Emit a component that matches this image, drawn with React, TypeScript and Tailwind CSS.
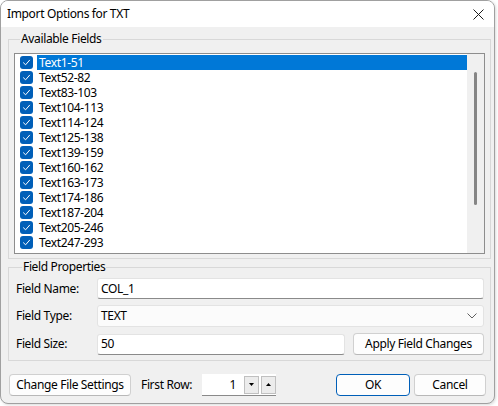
import React from "react";

const fields = [
  "Text1-51",
  "Text52-82",
  "Text83-103",
  "Text104-113",
  "Text114-124",
  "Text125-138",
  "Text139-159",
  "Text160-162",
  "Text163-173",
  "Text174-186",
  "Text187-204",
  "Text205-246",
  "Text247-293",
];

function Check() {
  return (
    <span className="flex h-[13px] w-[13px] shrink-0 items-center justify-center rounded-[3px] bg-[#005fb8]">
      <svg width="9" height="9" viewBox="0 0 9 9" fill="none">
        <path d="M1.5 4.8 L3.6 6.8 L7.6 2.2" stroke="#ffffff" strokeWidth="1" strokeLinecap="round" strokeLinejoin="round" />
      </svg>
    </span>
  );
}

function Button({ children, primary, className }: { children: React.ReactNode; primary?: boolean; className?: string }) {
  return (
    <button
      className={
        "flex h-[22px] items-center justify-center rounded-[4px] border bg-[#fdfdfd] text-[12px] leading-[16px] text-black " +
        (primary ? "border-[#005fb8] " : "border-[#d0d0d0] border-b-[#b8b8b8] ") +
        (className ?? "")
      }
    >
      {children}
    </button>
  );
}

function Input({ value, className }: { value: string; className?: string }) {
  return (
    <div
      className={
        "flex h-[21px] items-center rounded-[3px] border border-[#e3e3e3] border-b-[#8a8a8a] bg-white pl-[3px] text-[12px] leading-[16px] " +
        (className ?? "")
      }
    >
      {value}
    </div>
  );
}

export default function App() {
  return (
    <div
      className="h-[406px] w-[498px] bg-white tracking-[-0.35px]"
      style={{ fontFamily: '"Noto Sans", "Liberation Sans", sans-serif' }}
    >
      <div className="h-[404px] w-[495px] overflow-hidden rounded-[8px] border border-[#a0a0a0] bg-[#f0f0f0] shadow-[1px_1px_3px_rgba(0,0,0,0.15)]">
        {/* title bar */}
        <div className="flex h-[26px] items-center justify-between bg-white pl-[6px] pr-[10px]">
          <span className="text-[12px] leading-[16px] text-black">Import Options for TXT</span>
          <svg width="11" height="11" viewBox="0 0 11 11">
            <path d="M0.5 0.5 L10.5 10.5 M10.5 0.5 L0.5 10.5" stroke="#1a1a1a" strokeWidth="1" />
          </svg>
        </div>

        <div className="pl-[7px] pr-[3px]">
          {/* Available Fields */}
          <fieldset className="mt-[4px] border border-[#d8d8d8] px-[5px] pb-[4px]">
            <legend className="ml-[6px] px-[1px] text-[12px] leading-[16px] text-black">Available Fields</legend>
            <div className="mt-[6px] flex h-[201px] border border-[#8d8d8d] bg-white">
              <div className="flex-1 pt-[1px]">
                {fields.map((f, i) => (
                  <div key={f} className="flex h-[15px] items-center pl-[5px]">
                    <Check />
                    <span
                      className={
                        "ml-[4px] flex h-[15px] flex-1 items-center pl-[2px] text-[12px] leading-[15px] " +
                        (i === 0 ? "bg-[#0078d7] text-white" : "text-black")
                      }
                    >
                      {f}
                    </span>
                  </div>
                ))}
              </div>
              <div className="flex w-[17px] justify-center bg-[#f0f0f0] pt-[18px]">
                <div className="h-[133px] w-[3px] rounded-full bg-[#858585]" />
              </div>
            </div>
          </fieldset>

          {/* Field Properties */}
          <fieldset className="border border-[#d8d8d8] pb-[5px] pl-[7px] pr-[6px]">
            <legend className="ml-[6px] px-[1px] text-[12px] leading-[16px] text-black">Field Properties</legend>
            <div className="mt-[3px] flex flex-col gap-[6px]">
              <div className="flex items-center">
                <span className="w-[81px] text-[12px] leading-[16px] text-black">Field Name:</span>
                <Input value="COL_1" className="flex-1" />
              </div>
              <div className="flex items-center">
                <span className="w-[81px] text-[12px] leading-[16px] text-black">Field Type:</span>
                <div className="flex h-[22px] flex-1 items-center justify-between rounded-[3px] border border-[#e3e3e3] bg-[#fbfbfb] pl-[3px] pr-[6px] text-[12px] leading-[16px]">
                  <span>TEXT</span>
                  <svg width="10" height="6" viewBox="0 0 10 6">
                    <path d="M0.5 0.5 L5 5 L9.5 0.5" stroke="#606060" strokeWidth="1" fill="none" />
                  </svg>
                </div>
              </div>
              <div className="flex items-center">
                <span className="w-[81px] text-[12px] leading-[16px] text-black">Field Size:</span>
                <Input value="50" className="w-[248px]" />
                <Button className="ml-[8px] flex-1">Apply Field Changes</Button>
              </div>
            </div>
          </fieldset>

          {/* bottom row */}
          <div className="mt-[13px] flex items-center pl-[1px] pr-[5px]">
            <Button className="w-[122px]">Change File Settings</Button>
            <span className="ml-[10px] text-[12px] leading-[16px] text-black">First Row:</span>
            <div className="ml-[10px] flex h-[22px] w-[74px] items-center border-b border-[#8a8a8a] bg-white">
              <span className="flex-1 pr-[8px] text-right text-[12px] leading-[16px]">1</span>
              <div className="flex h-[18px] w-[15px] items-center justify-center border border-[#c0c0c0] bg-[#ececec]">
                <svg width="5" height="3" viewBox="0 0 5 3"><path d="M0 0 H5 L2.5 3 Z" fill="#000" /></svg>
              </div>
              <div className="ml-[2px] flex h-[18px] w-[15px] items-center justify-center border border-[#c0c0c0] bg-[#ececec]">
                <svg width="5" height="3" viewBox="0 0 5 3"><path d="M0 3 H5 L2.5 0 Z" fill="#000" /></svg>
              </div>
            </div>
            <div className="flex-1" />
            <Button primary className="w-[74px]">OK</Button>
            <Button className="ml-[4px] w-[72px]">Cancel</Button>
          </div>
        </div>
      </div>
    </div>
  );
}
